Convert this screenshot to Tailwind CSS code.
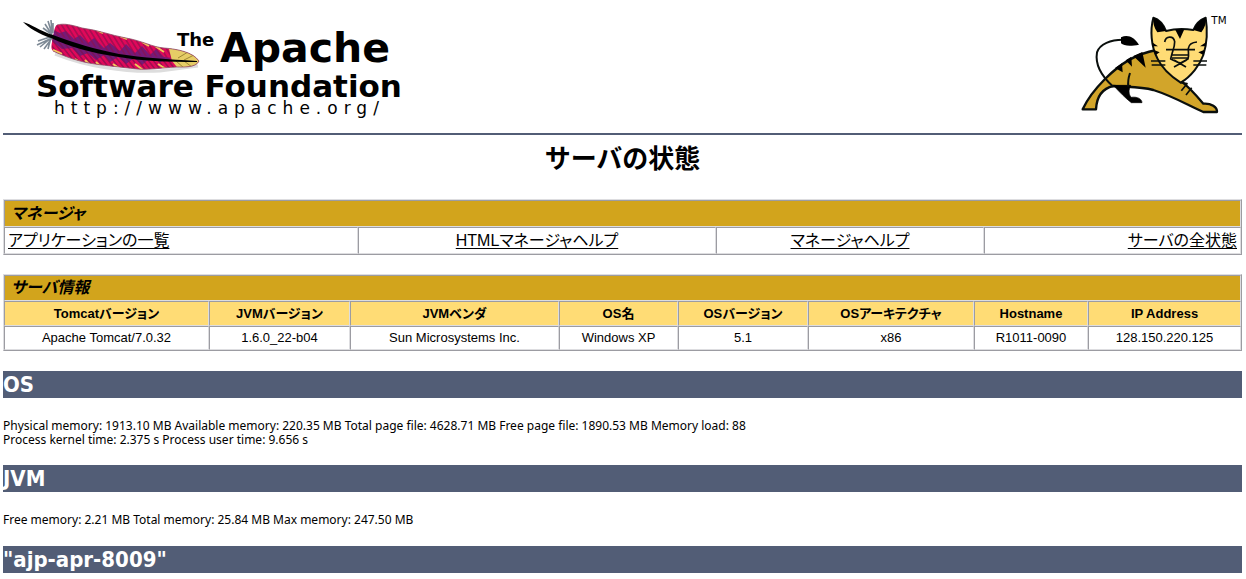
<!DOCTYPE html>
<html lang="ja">
<head>
<meta charset="utf-8">
<title>サーバの状態</title>
<script src="https://cdn.jsdelivr.net/npm/@tailwindcss/browser@4"></script>
</head>
<body class="bg-white text-black pl-[3px] pr-1 font-['Liberation_Sans','Noto_Sans_CJK_JP',sans-serif]">
<header class="flex items-start justify-between border-b-2 border-[#525d76] h-[135px] pt-[10px]">
  <a href="#" aria-label="The Apache Software Foundation" class="block ml-[17px]">
  <svg width="390" height="112" viewBox="20 10 390 112" class="block">
    <defs>
      <pattern id="barbTop" width="5" height="80" patternUnits="userSpaceOnUse" patternTransform="skewX(32)">
        <path d="M1 0V80" stroke="#8c0f4c" stroke-width="1.3"/>
      </pattern>
      <pattern id="barbLow" width="5" height="80" patternUnits="userSpaceOnUse" patternTransform="skewX(38)">
        <path d="M1 0V80" stroke="#7c0f4c" stroke-width="1.3"/>
      </pattern>
      <clipPath id="vane"><path d="M57 25C64 23 72 25 82 28C98 30 110 35 126 38C143 41 152 47 164 48C177 49 193 52 199 61C196 68 183 67 177 67C160 68 148 70 137 69C119 67 108 66 95 64C80 62 66 57 53 51C50 48 52 44 53 36C55 31 54 27 57 25Z"/></clipPath>
    </defs>
    <path d="M55 54C85 66 125 73 160 71L198 66" fill="none" stroke="#dddddd" stroke-width="3"/>
    <g fill="none" stroke="#7d8995" stroke-width="1.6">
      <path d="M52 35L45 24M52 34L48 21M52 33L51 20M51 34L43 28M50 37L38 41M51 38L40 47M52 38L44 49M52 38L37 45M51 37L48 49M53 33L53 23"/>
    </g>
    <g clip-path="url(#vane)">
      <path d="M45 15H205V75H45Z" fill="#e0085a"/>
      <path d="M53 30L60 33L66 31L74 39L80 35L88 43L94 38L104 48L110 43L120 51L126 44L135 53L142 46L150 55L156 49L164 57L172 58L160 62L150 58L142 65L134 58L126 64L118 57L110 62L104 55L96 60L88 53L80 56L72 48L62 49L52 41Z" fill="#741a78"/>
      <path d="M52 15H202V60L119 54L52 34Z" fill="url(#barbTop)"/>
      <path d="M52 36L119 57L202 62V75H52Z" fill="url(#barbLow)"/>
      <path d="M168 45L202 54V72H181L172 61Z" fill="#e6cd66"/>
      <path d="M97 30l6 3M120 36l7 3M142 42l7 4M155 46l9 6M75 59l5 3M85 60l5 5M96 62l4 4M113 64l6 4M135 64l8 6M158 64l8 5M53 50l9 4" stroke="#f0c75a" stroke-width="2"/>
      <path d="M178 58l10-6M184 60l10-5M176 61l8 7M184 61l8 6" stroke="#8a7427" stroke-width=".8"/>
    </g>
    <path d="M57 25C64 23 72 25 82 28C98 30 110 35 126 38C143 41 152 47 164 48C177 49 193 52 199 61C196 68 183 67 177 67C160 68 148 70 137 69C119 67 108 66 95 64C80 62 66 57 53 51" fill="none" stroke="#8f5068" stroke-width=".8"/>
    <path d="M23 22C31 24 40 31 53 35C75 43 94 49 119 54C143 58 168 59 197 61V62C168 62 140 61 119 57C90 53 68 46 51 38C39 34 29 28 23 22Z"/>
    <g class="font-['DejaVu_Sans']">
      <text x="177" y="46" class="text-[18px] font-bold">The</text>
      <text x="220" y="62" class="text-[41px] font-bold">Apache</text>
      <text x="36" y="97" class="text-[31px] font-bold">Software Foundation</text>
      <text x="54" y="114" class="text-[17px] tracking-[6px]">http://www.apache.org/</text>
    </g>
  </svg>
  </a>
  <a href="#" aria-label="Apache Tomcat" class="block mr-3 mt-[5px]">
  <svg width="150" height="100" viewBox="60 45 450 300" class="block" stroke-linejoin="round">
    <path d="M68 328C78 306 100 272 135 237C180 192 225 162 290 150L365 245C388 262 407 284 430 311C454 309 472 322 471 336H430C385 316 340 289 280 270C238 259 208 262 160 258C125 266 110 290 108 328Z" fill="#d2a52a" stroke="#0a0f0d" stroke-width="7"/>
    <path d="M160 256H212C205 270 206 282 213 292C234 289 246 298 246 308H214C196 294 179 277 160 256Z" stroke="#000" stroke-width="2"/>
    <path d="M210 219C205 234 203 245 205 260M160 260C118 223 106 187 111 157C119 132 153 119 188 119" fill="none" stroke="#0a0f0d" stroke-width="6"/>
    <path d="M183 112C205 102 222 113 237 134C212 139 191 138 183 130Z"/>
    <path d="M165 204L188 217L186 190ZM197 181L216 200L214 170ZM220 168L257 203L247 156Z"/>
    <path d="M362 248L381 251L364 272M395 263L378 285" fill="none" stroke="#0a0f0d" stroke-width="5"/>
    <path d="M280 53C270 90 273 139 292 175C307 207 333 229 362 248C394 229 420 194 430 165C442 128 443 90 437 53C421 59 408 70 400 90C371 85 347 85 318 93C309 70 297 58 280 53Z" fill="#ffdc75" stroke="#0a0f0d" stroke-width="6"/>
    <path d="M280 53C297 58 309 70 318 93L292 97C282 82 278 68 280 53ZM437 53C421 59 408 70 400 90L424 97C435 83 439 68 437 53ZM345 88H373L360 117ZM276 127L294 139L277 139ZM280 149L299 157L287 165ZM438 127L420 139L437 139ZM434 149L415 157L430 165Z"/>
    <path d="M314 126C317 107 341 106 344 125C344 141 339 149 335 165L332 177C348 185 357 191 363 188L384 177C388 165 384 155 385 145C387 132 397 127 411 126M318 149H405M337 165H384M336 174H384M342 201L380 180M342 180L378 201M273 183H316M275 195H316M400 183H441M400 195H439" fill="none" stroke="#0a0f0d" stroke-width="5"/>
    <text x="454" y="72" class="text-[31px] font-['DejaVu_Sans']">TM</text>
  </svg>
  </a>
</header>
<main>
<h1 class="text-center text-[26px] leading-[40px] font-bold mt-1 mb-5">サーバの状態</h1>

<table class="w-full table-fixed border-separate border-spacing-0 border border-t-[#dddde0] border-l-[#dddde0] border-r-[#9c9ca2] border-b-[#9c9ca2] leading-5 [font-feature-settings:'palt']">
  <colgroup><col class="w-[354px]"><col class="w-[358px]"><col class="w-[268px]"><col class="w-[257px]"></colgroup>
  <tr class="h-[27px] bg-[#d2a41c]"><th colspan="4" class="border border-t-[#9c9ca2] border-l-[#9c9ca2] border-r-[#dddde0] border-b-[#dddde0] px-1.5 py-0 text-left text-[16px] font-bold italic">マネージャ</th></tr>
  <tr class="h-[27px] text-[16px]">
    <td class="border border-t-[#9c9ca2] border-l-[#9c9ca2] border-r-[#dddde0] border-b-[#dddde0] px-[3px] py-0 text-left"><a href="#" class="underline underline-offset-2">アプリケーションの一覧</a></td>
    <td class="border border-t-[#9c9ca2] border-l-[#9c9ca2] border-r-[#dddde0] border-b-[#dddde0] px-[3px] py-0 text-center"><a href="#" class="underline underline-offset-2">HTMLマネージャヘルプ</a></td>
    <td class="border border-t-[#9c9ca2] border-l-[#9c9ca2] border-r-[#dddde0] border-b-[#dddde0] px-[3px] py-0 text-center"><a href="#" class="underline underline-offset-2">マネージャヘルプ</a></td>
    <td class="border border-t-[#9c9ca2] border-l-[#9c9ca2] border-r-[#dddde0] border-b-[#dddde0] px-[3px] py-0 text-right"><a href="#" class="underline underline-offset-2">サーバの全状態</a></td>
  </tr>
</table>

<table class="mt-[19px] w-full table-fixed border-separate border-spacing-0 border border-t-[#dddde0] border-l-[#dddde0] border-r-[#9c9ca2] border-b-[#9c9ca2] leading-5 text-center text-[13px] [font-feature-settings:'palt'] [&_th]:border [&_th]:border-t-[#9c9ca2] [&_th]:border-l-[#9c9ca2] [&_th]:border-r-[#dddde0] [&_th]:border-b-[#dddde0] [&_td]:border [&_td]:border-t-[#9c9ca2] [&_td]:border-l-[#9c9ca2] [&_td]:border-r-[#dddde0] [&_td]:border-b-[#dddde0]">
  <colgroup><col class="w-[205px]"><col class="w-[141px]"><col class="w-[209px]"><col class="w-[119px]"><col class="w-[130px]"><col class="w-[166px]"><col class="w-[114px]"><col class="w-[153px]"></colgroup>
  <tr class="h-[26px] bg-[#d2a41c]"><th colspan="8" class="px-1.5 py-0 text-left text-[16px] font-bold italic">サーバ情報</th></tr>
  <tr class="h-[25px] bg-[#ffdc75]"><th class="p-0">Tomcatバージョン</th><th class="p-0">JVMバージョン</th><th class="p-0">JVMベンダ</th><th class="p-0">OS名</th><th class="p-0">OSバージョン</th><th class="p-0">OSアーキテクチャ</th><th class="p-0">Hostname</th><th class="p-0">IP Address</th></tr>
  <tr class="h-6"><td class="p-0">Apache Tomcat/7.0.32</td><td class="p-0">1.6.0_22-b04</td><td class="p-0">Sun Microsystems Inc.</td><td class="p-0">Windows XP</td><td class="p-0">5.1</td><td class="p-0">x86</td><td class="p-0">R1011-0090</td><td class="p-0">128.150.220.125</td></tr>
</table>

<section class="mt-5 font-['Noto_Sans',sans-serif]">
  <h2 class="bg-[#525d76] text-white text-[22px] leading-[27px] font-bold font-['DejaVu_Sans_Condensed','DejaVu_Sans',sans-serif]">OS</h2>
  <p class="mt-[21px] mb-[18px] text-[12px] leading-[14px]">Physical memory: 1913.10 MB Available memory: 220.35 MB Total page file: 4628.71 MB Free page file: 1890.53 MB Memory load: 88<br>Process kernel time: 2.375 s Process user time: 9.656 s</p>
  <h2 class="bg-[#525d76] text-white text-[22px] leading-[27px] font-bold font-['DejaVu_Sans_Condensed','DejaVu_Sans',sans-serif]">JVM</h2>
  <p class="mt-[21px] mb-[19px] text-[12px] leading-[14px]">Free memory: 2.21 MB Total memory: 25.84 MB Max memory: 247.50 MB</p>
  <h2 class="bg-[#525d76] text-white text-[22px] leading-[27px] font-bold font-['DejaVu_Sans_Condensed','DejaVu_Sans',sans-serif]">"ajp-apr-8009"</h2>
</section>
</main>
</body>
</html>
